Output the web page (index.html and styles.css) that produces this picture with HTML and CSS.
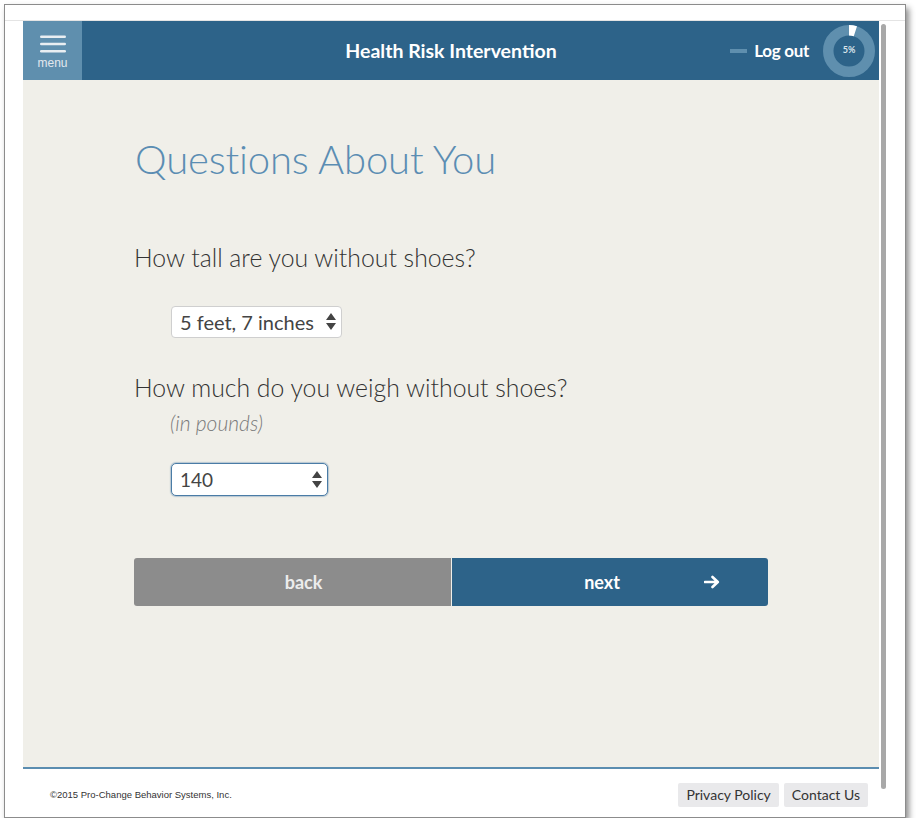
FILE: index.html
```html
<!DOCTYPE html>
<html lang="en">
<head>
<meta charset="utf-8">
<title>Health Risk Intervention</title>
<link rel="stylesheet" href="styles.css">
</head>
<body>
<div class="window">
  <div class="toolbar"></div>
  <div class="viewport">
    <div class="page">
      <header class="topbar">
        <div class="topbar-left">
          <button class="menu-btn" type="button">
            <svg class="hamburger" width="26" height="18" viewBox="0 0 26 18" aria-hidden="true">
              <rect x="0" y="0.5" width="26" height="2.6" rx="1.3" fill="#e9eef2"/>
              <rect x="0" y="7.7" width="26" height="2.6" rx="1.3" fill="#e9eef2"/>
              <rect x="0" y="14.9" width="26" height="2.6" rx="1.3" fill="#e9eef2"/>
            </svg>
            <span class="menu-label">menu</span>
          </button>
        </div>
        <h1 class="app-title">Health Risk Intervention</h1>
        <div class="topbar-right">
          <a class="logout" href="#"><span class="dash"></span>Log out</a>
          <div class="progress">
            <svg width="52" height="52" viewBox="0 0 52 52" aria-hidden="true">
              <circle cx="26" cy="26" r="20.75" fill="none" stroke="#5f8fae" stroke-width="10.5"/>
              <circle cx="26" cy="26" r="20.75" fill="none" stroke="#ffffff" stroke-width="10.5" stroke-dasharray="6.52 130.38" transform="rotate(-90 26 26)"/>
            </svg>
            <span class="progress-label">5%</span>
          </div>
        </div>
      </header>
      <main class="content">
        <h2 class="page-title">Questions About You</h2>
        <div class="question q-height">
          <p class="q-text">How tall are you without shoes?</p>
          <select class="field field-height">
            <option>5 feet, 7 inches</option>
          </select>
        </div>
        <div class="question q-weight">
          <p class="q-text">How much do you weigh without shoes?</p>
          <p class="q-hint">(in pounds)</p>
          <select class="field field-weight focused">
            <option>140</option>
          </select>
        </div>
        <div class="nav-buttons">
          <button class="btn btn-back" type="button">back</button>
          <button class="btn btn-next" type="button">
            <span class="btn-label">next</span>
            <svg class="arrow" width="16" height="14" viewBox="0 0 16 14" aria-hidden="true">
              <path d="M1 7 H13.5 M8.5 2 L13.8 7 L8.5 12" fill="none" stroke="#ffffff" stroke-width="2.6" stroke-linecap="round" stroke-linejoin="round"/>
            </svg>
          </button>
        </div>
      </main>
      <footer class="footer">
        <p class="copyright">©2015 Pro-Change Behavior Systems, Inc.</p>
        <nav class="footer-links">
          <a href="#" class="footer-link">Privacy Policy</a>
          <a href="#" class="footer-link">Contact Us</a>
        </nav>
      </footer>
    </div>
    <div class="scrollbar"></div>
  </div>
</div>
</body>
</html>
```
FILE: styles.css
```css
* {
  box-sizing: border-box;
}

html, body {
  margin: 0;
  padding: 0;
  background: #ffffff;
}

body {
  font-family: Lato, "Liberation Sans", sans-serif;
  color: #333333;
}

.window {
  margin: 4px 0 0 4px;
  width: 902px;
  height: 814px;
  border: 1px solid #8c8c8c;
  background: #ffffff;
  box-shadow: 3px 4px 6px rgba(0, 0, 0, 0.45);
  display: flex;
  flex-direction: column;
}

.toolbar {
  height: 16px;
  border-bottom: 1px solid #e4e4e4;
  flex: none;
}

.viewport {
  display: flex;
  padding-left: 18px;
  flex: 1;
}

.page {
  width: 856px;
  display: flex;
  flex-direction: column;
}

.scrollbar {
  width: 5px;
  height: 765px;
  margin: 3px 0 0 2px;
  background: #a8a8a8;
  border-radius: 3px;
}

/* Header */
.topbar {
  height: 59px;
  background: #2d6389;
  display: grid;
  grid-template-columns: 1fr auto 1fr;
  align-items: center;
}

.topbar-left {
  justify-self: start;
  height: 100%;
}

.menu-btn {
  width: 59px;
  height: 100%;
  border: 0;
  margin: 0;
  padding: 14px 0 0;
  background: #5f8fae;
  display: flex;
  flex-direction: column;
  align-items: center;
  gap: 4px;
  cursor: pointer;
}

.hamburger {
  display: block;
  margin-left: 1px;
}

.menu-label {
  font-family: "Liberation Sans", Arial, sans-serif;
  font-size: 12px;
  line-height: 13px;
  color: #e2e8ee;
}

.app-title {
  margin: 0;
  font-family: Lato, "Liberation Sans", sans-serif;
  font-weight: 700;
  font-size: 19.5px;
  color: #ffffff;
  letter-spacing: 0;
}

.topbar-right {
  justify-self: end;
  display: flex;
  align-items: center;
  gap: 14px;
  padding-right: 4px;
}

.logout {
  display: flex;
  align-items: center;
  gap: 7px;
  color: #ffffff;
  font-weight: 700;
  font-size: 17px;
  text-decoration: none;
  letter-spacing: -0.3px;
}

.dash {
  width: 17px;
  height: 4px;
  background: #5f8fae;
  display: block;
}

.progress {
  width: 52px;
  height: 52px;
  position: relative;
  display: grid;
  place-items: center;
}

.progress svg {
  position: absolute;
  left: 0;
  top: 0;
}

.progress-label {
  position: relative;
  font-size: 9px;
  font-weight: 700;
  color: #dce5ec;
  margin-top: -2px;
}

/* Main content */
.content {
  height: 687px;
  background: #f0efe9;
  padding: 55px 0 0 111px;
}

.page-title {
  margin: 0;
  font-weight: 300;
  font-size: 40px;
  line-height: 48px;
  color: #5b8db3;
  padding-left: 1px;
  letter-spacing: -0.15px;
}

.q-text {
  margin: 0;
  font-weight: 300;
  font-size: 24.8px;
  line-height: 30px;
  color: #333333;
  padding-left: 0;
}

.q-height {
  margin-top: 60px;
}

.q-weight {
  margin-top: 35px;
}

.q-hint {
  margin: 8px 0 0 36px;
  font-weight: 300;
  font-style: italic;
  font-size: 21px;
  line-height: 24px;
  color: #7a7a7a;
}

.field {
  display: block;
  appearance: none;
  -webkit-appearance: none;
  margin-left: 37px;
  height: 32px;
  padding: 0 24px 0 8px;
  border: 1px solid #cfcfcf;
  border-radius: 4px;
  background-color: #ffffff;
  background-image: url("data:image/svg+xml;utf8,<svg xmlns='http://www.w3.org/2000/svg' width='10' height='18' viewBox='0 0 10 18'><path d='M5 0 L10 7 H0 Z M0 10 H10 L5 17 Z' fill='%23444444'/></svg>");
  background-repeat: no-repeat;
  background-position: right 5px center;
  font-family: Lato, "Liberation Sans", sans-serif;
  font-size: 20px;
  color: #444444;
}

.field-height {
  margin-top: 33px;
  width: 171px;
}

.field-weight {
  margin-top: 28px;
  width: 157px;
  height: 33px;
  font-size: 19px;
}

.field.focused {
  border-color: #4a7ca6;
  border-radius: 5px;
  box-shadow: 0 0 1px 1px rgba(74, 124, 166, 0.35);
}

.nav-buttons {
  margin-top: 62px;
  display: flex;
  gap: 1px;
  width: 634px;
}

.btn {
  height: 48px;
  border: 0;
  margin: 0;
  font-family: Lato, "Liberation Sans", sans-serif;
  font-weight: 700;
  font-size: 18px;
  color: #ffffff;
  display: flex;
  align-items: center;
  cursor: pointer;
}

.btn-back {
  width: 317px;
  background: #8c8c8c;
  color: #ececec;
  border-radius: 3px 0 0 3px;
  justify-content: center;
  padding-left: 28px;
}

.btn-next {
  width: 316px;
  background: #2d6389;
  border-radius: 0 3px 3px 0;
  padding: 0 0 0 131px;
}

.btn-label {
  width: 38px;
  text-align: center;
}

.arrow {
  display: block;
  margin-left: 83px;
}

/* Footer */
.footer {
  flex: 1;
  border-top: 2px solid #5b8db0;
  background: #ffffff;
  display: flex;
  justify-content: space-between;
  align-items: flex-start;
  padding: 14px 11px 0 27px;
}

.copyright {
  margin: 6px 0 0;
  font-family: "Liberation Sans", Arial, sans-serif;
  font-size: 9.5px;
  line-height: 12px;
  color: #333333;
}

.footer-links {
  display: flex;
  gap: 5px;
}

.footer-link {
  display: block;
  height: 24px;
  line-height: 24px;
  padding: 0 8px;
  background: #e9e9eb;
  border-radius: 2px;
  font-size: 14px;
  color: #333333;
  text-decoration: none;
}
```
